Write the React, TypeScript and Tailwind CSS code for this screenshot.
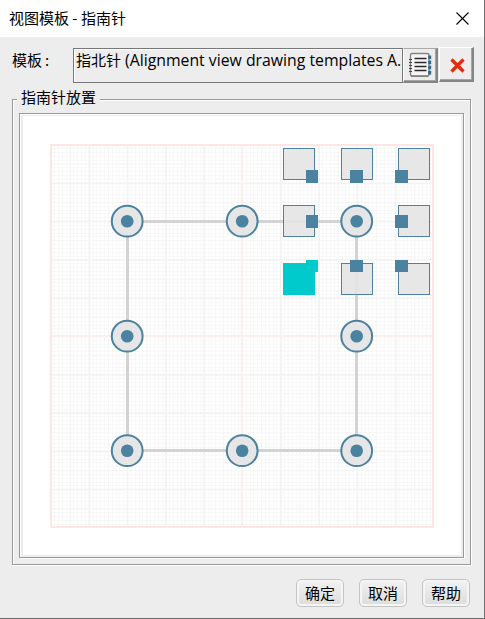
import React from "react";

const STEP = 19.15;
const LEFT = 51;
const TOP = 145;
const SIZE = 382;
const BLUE = "#4b82a0";
const CJK = "font-['Noto_Sans_CJK_SC',sans-serif]";

const minor = Array.from({ length: 101 }, (_, i) => i).filter((i) => i % 5 !== 0);
const major = Array.from({ length: 19 }, (_, i) => i + 1).filter((i) => i !== 10);

const nodes = [
  [127, 221], [242, 221], [356.5, 221],
  [127, 336], [356.5, 336],
  [127, 450.5], [242, 450.5], [356.5, 450.5],
];

type Box = { x: number; y: number; hx: number; hy: number; hw: number; hh: number; on?: boolean };
const boxes: Box[] = [
  { x: 283, y: 148, hx: 306, hy: 170, hw: 12, hh: 13 },
  { x: 341, y: 148, hx: 350, hy: 170, hw: 13, hh: 13 },
  { x: 398, y: 148, hx: 395, hy: 170, hw: 13, hh: 13 },
  { x: 283, y: 205, hx: 306, hy: 215, hw: 12, hh: 13 },
  { x: 398, y: 205, hx: 395, hy: 215, hw: 13, hh: 13 },
  { x: 283, y: 263, hx: 306, hy: 260, hw: 12, hh: 12, on: true },
  { x: 341, y: 263, hx: 350, hy: 260, hw: 13, hh: 12 },
  { x: 398, y: 263, hx: 395, hy: 260, hw: 13, hh: 12 },
];

function Placement() {
  const end = LEFT + SIZE;
  const bottom = TOP + SIZE;
  return (
    <svg className="block h-[439px] w-[438px]" viewBox="23 116 438 439">
      <g stroke="#f8f8f8" strokeWidth="1" shapeRendering="crispEdges">
        {minor.map((i) => {
          const d = (i * STEP) / 5;
          return <path key={i} d={`M${LEFT + d} ${TOP}V${bottom}M${LEFT} ${TOP + d}H${end}`} />;
        })}
      </g>
      {major.map((i) => (
        <path
          key={i}
          d={`M${LEFT + i * STEP} ${TOP}V${bottom}M${LEFT} ${TOP + i * STEP}H${end}`}
          stroke={i % 2 ? "#f5f5f5" : "#f3f3f3"}
          strokeWidth={i % 2 ? 1.2 : 1.8}
        />
      ))}
      <path d={`M242 ${TOP}V${bottom}M${LEFT} 336H${end}`} stroke="#fdeeee" strokeWidth="2" />
      <rect x={LEFT} y={TOP} width={SIZE} height={SIZE} fill="none" stroke="#ffe6e6" strokeWidth="2" />
      <rect x="127.5" y="221.5" width="229" height="229" fill="none" stroke="#d3d3d3" strokeWidth="3" />
      {nodes.map(([x, y]) => (
        <g key={`${x}-${y}`}>
          <circle cx={x + 0.2} cy={y + 0.2} r="15.4" fill="#e6e6e6" stroke={BLUE} strokeWidth="2" />
          <circle cx={x + 0.2} cy={y + 0.2} r="6.3" fill={BLUE} />
        </g>
      ))}
      {boxes.map((b) => {
        const color = b.on ? "#00cacc" : BLUE;
        return (
          <g key={`${b.x}-${b.y}`} shapeRendering="crispEdges">
            <rect x={b.x + 0.5} y={b.y + 0.5} width="31" height="31" fill={b.on ? color : "#e4e4e4"} fillOpacity={b.on ? 1 : 0.9} stroke={color} />
            <rect x={b.hx} y={b.hy} width={b.hw} height={b.hh} fill={color} />
          </g>
        );
      })}
    </svg>
  );
}

function NotebookIcon() {
  return (
    <svg className="h-7 w-6" viewBox="0 0 24 28" fill="none">
      <rect x="2.5" y="2.5" width="18.5" height="22.500" rx="1.5" fill="#f6f6f6" stroke="#858585" strokeWidth="1.4" />
      <path d="M3 25.200H20" stroke="#777" />
      <path d="M6.500 7.500H18.500M6.500 11.500H18.500M6.500 15.500H18.500M6.500 19.500H18.500" stroke="#2b2b2b" strokeWidth="1.4" />
      <path d="M1 8.500H4M1 11.500H4M1 14.500H4M1 17.500H4M1 20.500H4" stroke="#444" strokeWidth="1.2" />
      <path d="M21.700 4.500V23.500" stroke="#2e6c8f" strokeWidth="3" strokeDasharray="3.600 1.500" />
    </svg>
  );
}

function Action({ label }: { label: string }) {
  return (
    <button className={`h-7 w-12 rounded-[5px] border-[1.5px] border-[#c4c4c4] bg-linear-to-b from-[#f2f2f2] to-[#dcdcdc] text-[15px] leading-[26px] text-black shadow-[inset_0_0_0_2px_#f5f5f5] ${CJK}`}>
      {label}
    </button>
  );
}

export default function App() {
  return (
    <div className={`flex h-[619px] w-[485px] flex-col border-r border-b border-[#707070] bg-[#ededed] text-[15px] text-black ${CJK}`}>
      <header className="flex h-[37px] shrink-0 items-start justify-between bg-white pr-[15px] pl-[9px]">
        <h1 className="leading-[35px]">视图模板 - 指南针</h1>
        <svg className="mt-3 size-[13px]" viewBox="0 0 13 13" stroke="#000" strokeWidth="1.1">
          <path d="M.5 .5L12.500 12.500M12.500 .5L.5 12.500" />
        </svg>
      </header>
      <div className="flex h-[62px] shrink-0 items-start pt-[10px]">
        <label className="w-[73px] pt-[1px] pl-[12px] leading-[24px]">模板<span className="ml-[3px]">:</span></label>
        <div className="mt-[1px] flex h-[35px] w-[330px] overflow-hidden border border-[#777] bg-[#ededed] pl-[2px] leading-[22px] whitespace-nowrap shadow-[inset_1px_1px_0_#fff]">
          <span>指北针</span>
          <span className="ml-[4px] font-['Open_Sans',sans-serif] text-[15.8px]">(Alignment view drawing templates A.</span>
        </div>
        <button className="mt-[1px] flex size-[35px] items-center justify-center border-t border-r-2 border-b-2 border-l border-t-[#aaa] border-r-[#858585] border-b-[#858585] border-l-white shadow-[inset_-1px_-1px_0_#a5a5a5]">
          <NotebookIcon />
        </button>
        <button className="ml-[1px] flex size-[35px] items-center justify-center border-t border-r-2 border-b-2 border-l border-t-white border-r-[#858585] border-b-[#858585] border-l-white shadow-[inset_-1px_-1px_0_#a5a5a5]">
          <svg className="mt-[2px] ml-[3px] size-[15px]" viewBox="0 0 15 15" stroke="#e62a0c" strokeWidth="3.3">
            <path d="M1.500 1.500L13.500 13.500M13.500 1.500L1.500 13.500" />
          </svg>
        </button>
      </div>
      <fieldset className="relative ml-3 h-[466px] w-[459px] shrink-0 border border-[#999] pt-[13px] pl-[6px] shadow-[1px_1px_0_#fff,inset_1px_1px_0_#fff]">
        <legend className="absolute -top-[15px] left-[4px] bg-[#ededed] px-[4px] leading-[24px]">指南针放置</legend>
        <div className="h-[445px] w-[445px] border border-[#999] bg-[#ededed] pt-[2px] pl-[3px] shadow-[1px_1px_0_#fff,inset_1px_1px_0_#fff]">
          <div className="w-[438px] bg-white"><Placement /></div>
        </div>
      </fieldset>
      <footer className="flex justify-end gap-[15px] pt-[14px] pr-[14px]">
        <Action label="确定" />
        <Action label="取消" />
        <Action label="帮助" />
      </footer>
    </div>
  );
}
